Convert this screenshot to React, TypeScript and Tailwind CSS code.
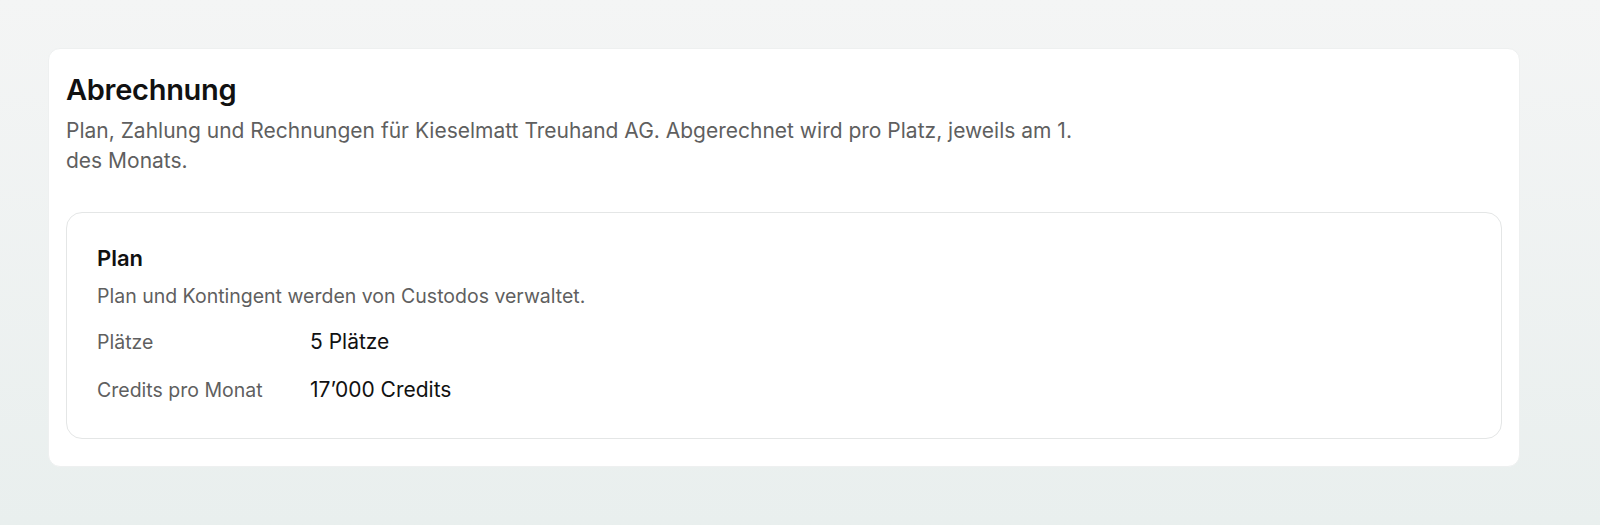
const ROWS = [
  { label: 'Plätze', value: '5 Plätze' },
  { label: 'Credits pro Monat', value: '17’000 Credits' },
];

export default function App() {
  return (
    <div
      className="min-h-[525px] bg-gradient-to-b from-[#f4f5f5] to-[#e9efee] pb-12 pl-12 pr-20 pt-12"
      style={{ fontFamily: 'Inter, "Noto Sans", sans-serif' }}
    >
      <div className="rounded-xl border border-[#eef0f0] bg-white px-[17px] pb-[27px] pt-[23px]">
        <h1 className="text-[29px] font-semibold leading-[36px] tracking-[-0.01em] text-[#111111]">Abrechnung</h1>
        <p className="mt-[8px] max-w-[1020px] text-[21px] leading-[30px] text-[#5f5f5f]">
          Plan, Zahlung und Rechnungen für Kieselmatt Treuhand AG. Abgerechnet wird pro Platz, jeweils am 1. des
          Monats.
        </p>

        <section className="mt-[36px] rounded-2xl border border-[#e4e6e6] px-[30px] pb-[33px] pt-[30px]">
          <h2 className="text-[22px] font-semibold leading-[30px] text-[#111111]">Plan</h2>
          <p className="mt-[9px] text-[19.5px] leading-[28px] text-[#5f5f5f]">
            Plan und Kontingent werden von Custodos verwaltet.
          </p>
          <dl className="mt-[17px] space-y-[18px]">
            {ROWS.map((r) => (
              <div key={r.label} className="flex items-center">
                <dt className="w-[213px] text-[19.5px] leading-[30px] text-[#5f5f5f]">{r.label}</dt>
                <dd className="text-[21px] leading-[30px] text-[#111111]">{r.value}</dd>
              </div>
            ))}
          </dl>
        </section>
      </div>
    </div>
  );
}
